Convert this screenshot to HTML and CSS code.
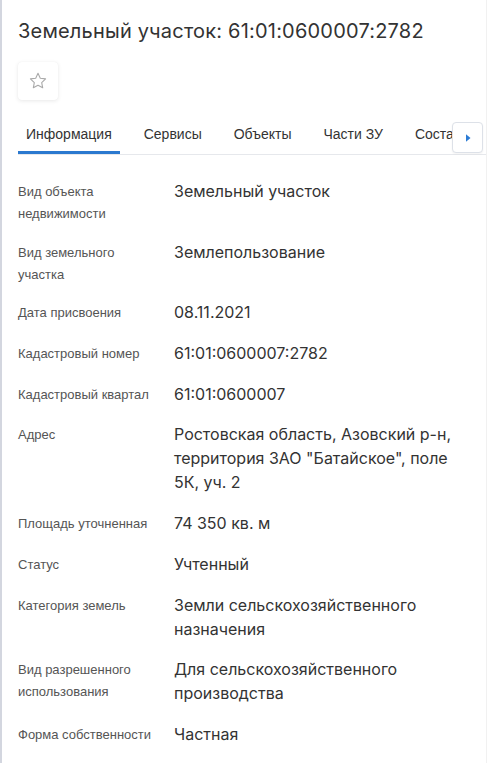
FILE: index.html
```html
<!DOCTYPE html>
<html lang="ru">
<head>
<meta charset="utf-8">
<link rel="stylesheet" href="styles.css">
</head>
<body>
<div class="panel">
  <h1 class="title">Земельный участок: 61:01:0600007:2782</h1>
  <button class="fav" type="button" aria-label="В избранное">
    <svg width="20" height="20" viewBox="0 0 24 24"><path d="M12 2.8l2.75 5.83 6.35.8-4.67 4.4 1.2 6.3L12 17.05l-5.63 3.08 1.2-6.3-4.67-4.4 6.35-.8z" fill="none" stroke="#a9a9a9" stroke-width="1.3" stroke-linejoin="round"/></svg>
  </button>
  <div class="tabs-wrap">
    <div class="tabs">
      <span class="tab active">Информация</span>
      <span class="tab">Сервисы</span>
      <span class="tab">Объекты</span>
      <span class="tab">Части ЗУ</span>
      <span class="tab">Состав</span>
      <span class="tab">Правообладатели</span>
    </div>
    <button class="scroll-btn" type="button" aria-label="Далее">
      <svg width="8" height="10" viewBox="0 0 8 10"><path d="M2 1.2L6.5 5 2 8.8z" fill="#2b7bd4"/></svg>
    </button>
  </div>
  <dl class="info">
    <dt>Вид объекта недвижимости</dt><dd>Земельный участок</dd>
    <dt>Вид земельного участка</dt><dd>Землепользование</dd>
    <dt>Дата присвоения</dt><dd>08.11.2021</dd>
    <dt>Кадастровый номер</dt><dd>61:01:0600007:2782</dd>
    <dt>Кадастровый квартал</dt><dd>61:01:0600007</dd>
    <dt>Адрес</dt><dd>Ростовская область, Азовский р-н, территория ЗАО "Батайское", поле 5К, уч. 2</dd>
    <dt>Площадь уточненная</dt><dd>74 350 кв. м</dd>
    <dt>Статус</dt><dd>Учтенный</dd>
    <dt>Категория земель</dt><dd>Земли сельскохозяйственного назначения</dd>
    <dt>Вид разрешенного использования</dt><dd>Для сельскохозяйственного производства</dd>
    <dt>Форма собственности</dt><dd>Частная</dd>
  </dl>
</div>
</body>
</html>
```

FILE: styles.css
```css
html, body {
  margin: 0;
  padding: 0;
  background: #fff;
}
body {
  width: 488px;
  height: 763px;
  overflow: hidden;
}
.panel {
  box-sizing: border-box;
  height: 763px;
  border-left: 2px solid #d3d6df;
  border-right: 1px solid #f1f1f1;
  width: 487px;
  padding: 19px 16px 0 16px;
  overflow: hidden;
}
.title {
  margin: 0;
  font-family: Inter, "Noto Sans", sans-serif;
  font-weight: 400;
  font-size: 20px;
  line-height: 25px;
  color: #333;
  letter-spacing: 0.2px;
}
.fav {
  display: flex;
  align-items: center;
  justify-content: center;
  width: 40px;
  height: 38px;
  margin-top: 18px;
  padding: 0;
  border: 0;
  border-radius: 4px;
  background: #fff;
  box-shadow: 0 1px 4px rgba(0, 0, 0, 0.09), 0 0 1px rgba(0, 0, 0, 0.06);
}
.tabs-wrap {
  position: relative;
  margin-top: 16px;
  margin-right: -16px;
}
.tabs {
  display: flex;
  gap: 16px;
  border-bottom: 1px solid #e6e8ec;
  overflow: hidden;
  white-space: nowrap;
}
.tab {
  flex: none;
  padding: 8px 8px 7px;
  font-family: "Liberation Sans", Arial, sans-serif;
  font-size: 14px;
  line-height: 20px;
  color: #333;
  border-bottom: 3px solid transparent;
}
.tab.active {
  border-bottom-color: #2b79cf;
}
.scroll-btn {
  position: absolute;
  top: 6px;
  left: 434px;
  width: 31px;
  height: 31px;
  padding: 0;
  display: flex;
  align-items: center;
  justify-content: center;
  background: #fff;
  border: 1px solid #dde1e8;
  border-radius: 4px;
  box-shadow: 0 1px 2px rgba(0, 0, 0, 0.05);
}
.info {
  display: grid;
  grid-template-columns: 156px 1fr;
  row-gap: 16.7px;
  margin: 24px 2px 0 0;
}
.info dt {
  margin: 0 0 -2px;
  padding: 2px 16px 0 0;
  font-family: "Liberation Sans", Arial, sans-serif;
  font-size: 13px;
  line-height: 22px;
  color: #555;
}
.info dd {
  margin: 0;
  font-family: Inter, "Noto Sans", sans-serif;
  font-size: 16px;
  line-height: 24px;
  color: #333;
}
```
